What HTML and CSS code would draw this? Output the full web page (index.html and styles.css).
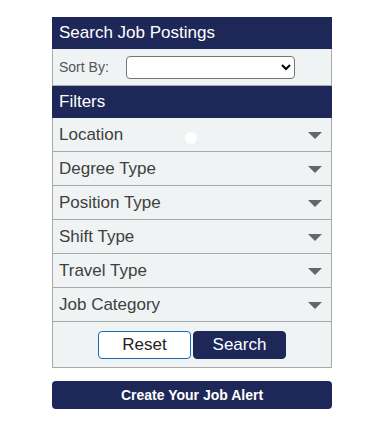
FILE: index.html
```html
<!DOCTYPE html>
<html>
<head>
<meta charset="utf-8">
<link rel="stylesheet" href="styles.css">
</head>
<body>
<div class="page">
  <div class="panel">
    <div class="bar">Search Job Postings</div>
    <div class="sort">
      <span class="sort-label">Sort By:</span>
      <select class="sort-select"><option></option></select>
    </div>
    <div class="bar">Filters</div>
    <div class="filters">
      <div class="row"><span>Location</span><i class="caret"></i><span class="dot"></span></div>
      <div class="row"><span>Degree Type</span><i class="caret"></i></div>
      <div class="row"><span>Position Type</span><i class="caret"></i></div>
      <div class="row"><span>Shift Type</span><i class="caret"></i></div>
      <div class="row"><span>Travel Type</span><i class="caret"></i></div>
      <div class="row"><span>Job Category</span><i class="caret"></i></div>
    </div>
    <div class="actions">
      <button class="btn btn-reset">Reset</button>
      <button class="btn btn-search">Search</button>
    </div>
  </div>
  <button class="alert">Create Your Job Alert</button>
</div>
</body>
</html>
```

FILE: styles.css
```css
* { box-sizing: border-box; }
html, body { margin: 0; padding: 0; background: #fff; }
body { font-family: "Liberation Sans", Arial, sans-serif; }
.page { padding: 17px 0 0 52px; width: 332px; }
.panel { width: 280px; }
.bar {
  background: #1d2758;
  color: #fff;
  font-size: 17px;
  height: 32px;
  line-height: 32px;
  padding-left: 7px;
}
.sort {
  background: #eff3f4;
  border: 1px solid #a9a9a9;
  border-top: none;
  height: 37px;
  display: flex;
  align-items: center;
  padding-left: 6px;
}
.sort-label { font-size: 14px; color: #555; width: 67px; }
.sort-select {
  width: 169px;
  height: 23px;
  border: 1px solid #767676;
  border-radius: 4px;
  background: #fff;
  font-size: 13px;
}
.filters { border-left: 1px solid #a9a9a9; border-right: 1px solid #a9a9a9; }
.row {
  position: relative;
  background: #eff3f4;
  height: 34px;
  border-bottom: 1px solid #a9a9a9;
  display: flex;
  align-items: center;
  justify-content: space-between;
  padding: 0 9px 0 6px;
  font-size: 17px;
  color: #3f3f3f;
}
.caret {
  width: 0; height: 0;
  border-left: 7.5px solid transparent;
  border-right: 7.5px solid transparent;
  border-top: 7px solid #666;
  margin-top: 2px;
}
.dot {
  position: absolute;
  left: 132px;
  top: 14px;
  width: 12px;
  height: 12px;
  border-radius: 50%;
  background: #fff;
}
.actions {
  background: #eff3f4;
  border: 1px solid #a9a9a9;
  border-top: none;
  height: 46px;
  display: flex;
  justify-content: center;
  align-items: center;
  gap: 2px;
  padding-top: 1px;
}
.btn {
  width: 93px;
  height: 28px;
  border-radius: 4px;
  font-family: "Liberation Sans", Arial, sans-serif;
  font-size: 17px;
  padding: 0;
  cursor: pointer;
}
.btn-reset { background: #fff; border: 1px solid #1a68b8; color: #222; }
.btn-search { background: #1d2758; border: 1px solid #1d2758; color: #fff; }
.alert {
  display: block;
  margin-top: 13px;
  width: 280px;
  height: 28px;
  border: none;
  border-radius: 4px;
  background: #1d2758;
  color: #fff;
  font-family: "Liberation Sans", Arial, sans-serif;
  font-weight: bold;
  font-size: 14px;
  padding: 0;
}
```
